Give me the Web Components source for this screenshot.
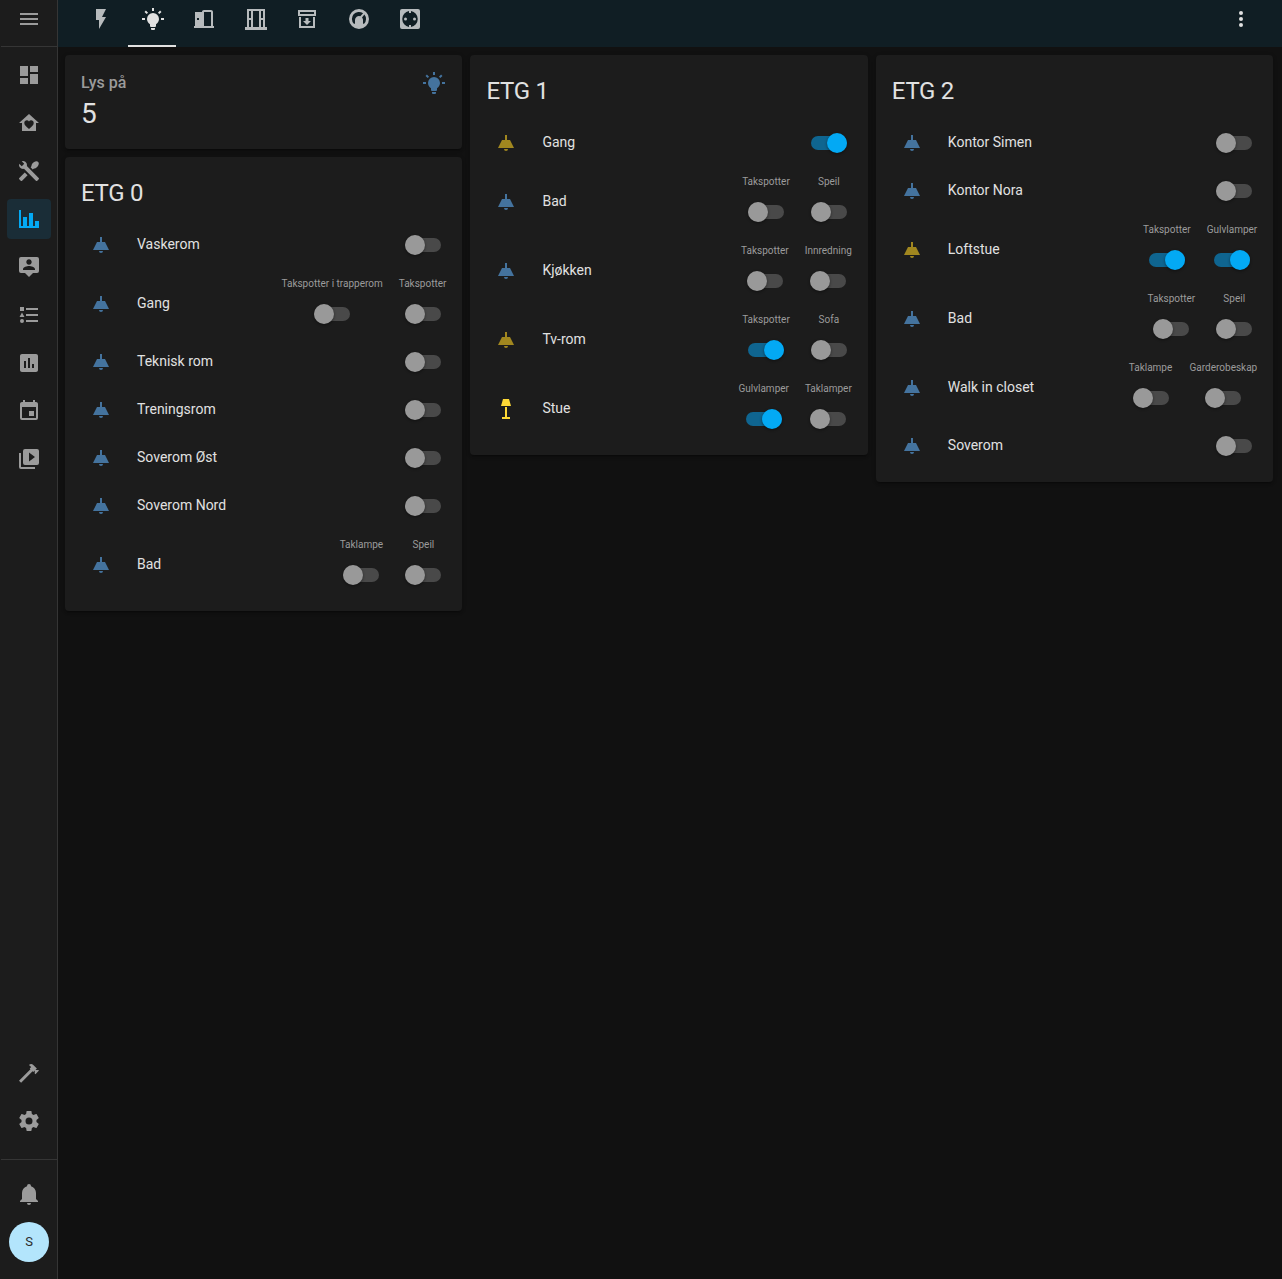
<!DOCTYPE html>
<html lang="nb">
<head>
<meta charset="utf-8">
<title>Lys</title>
<style>
html,body{margin:0;height:100%;background:#111;overflow:hidden}
body{font-family:Roboto,"Noto Sans",sans-serif;color:#e1e1e1}
</style>
</head>
<body>
<home-dashboard></home-dashboard>
<script>
const ICONS = {
  menu:'M3,6H21V8H3V6M3,11H21V13H3V11M3,16H21V18H3V16Z',
  dashboard:'M13,3V9H21V3M13,21H21V11H13M3,21H11V15H3M3,13H11V3H3V13Z',
  heart:'M12,3L2,12H5V20H19V12H22L12,3M12,18C9,15.6 7.3,14 7.3,12C7.3,10.4 8.5,9.3 9.9,9.3C10.8,9.3 11.5,9.7 12,10.4C12.5,9.7 13.2,9.3 14.1,9.3C15.5,9.3 16.7,10.4 16.7,12C16.7,14 15,15.6 12,18Z',
  tools:'M21.71 20.29L20.29 21.71A1 1 0 0 1 18.88 21.71L7 9.85A3.81 3.81 0 0 1 6 10A4 4 0 0 1 2.22 4.7L4.76 7.24L5.29 6.71L6.71 5.29L7.24 4.76L4.7 2.22A4 4 0 0 1 10 6A3.81 3.81 0 0 1 9.85 7L21.71 18.88A1 1 0 0 1 21.71 20.29M2.29 18.88A1 1 0 0 0 2.29 20.29L3.71 21.71A1 1 0 0 0 5.12 21.71L10.59 16.25L7.76 13.42M20.2 2.2C18.2 1.8 15.6 3.6 14.8 5.5C14.4 6.6 14.6 7.4 13.6 8.3L15.7 10.4C16.6 9.4 17.4 9.6 18.5 9.2C20.4 8.4 22.2 5.8 21.8 3.8Z',
  chart:'M22,21H2V3H4V19H6V10H10V19H12V6H16V19H18V14H22V21Z',
  person:'M20 2H4A2 2 0 0 0 2 4V16A2 2 0 0 0 4 18H8L12 22L16 18H20A2 2 0 0 0 22 16V4A2 2 0 0 0 20 2M12 4.3C13.5 4.3 14.7 5.5 14.7 7S13.5 9.7 12 9.7 9.3 8.5 9.3 7 10.5 4.3 12 4.3M18 15H6V14.1C6 12.1 10 11 12 11S18 12.1 18 14.1V15Z',
  list:'M5,9.5L7.5,14H2.5L5,9.5M3,4H7V8H3V4M5,20A2,2 0 0,0 7,18A2,2 0 0,0 5,16A2,2 0 0,0 3,18A2,2 0 0,0 5,20M9,5V7H21V5H9M9,19H21V17H9V19M9,13H21V11H9V13Z',
  poll:'M9 17H7V10H9V17M13 17H11V7H13V17M17 17H15V13H17V17M19 3H5C3.9 3 3 3.9 3 5V19C3 20.1 3.9 21 5 21H19C20.1 21 21 20.1 21 19V5C21 3.9 20.1 3 19 3Z',
  calendar:'M19,19H5V8H19M16,1V3H8V1H6V3H5C3.89,3 3,3.89 3,5V19A2,2 0 0,0 5,21H19A2,2 0 0,0 21,19V5C21,3.89 20.1,3 19,3H18V1M17,12H12V17H17V12Z',
  media:'M4,6H2V20A2,2 0 0,0 4,22H18V20H4V6M20,2H8A2,2 0 0,0 6,4V16A2,2 0 0,0 8,18H20A2,2 0 0,0 22,16V4A2,2 0 0,0 20,2M12,14.5V5.5L18,10L12,14.5Z',
  hammer:'M2,19.63L13.43,8.2L12.72,7.5L14.14,6.07L12,3.89C13.2,2.7 15.09,2.7 16.27,3.89L19.87,7.5L18.45,8.91H21.29L22,9.62L18.45,13.21L17.74,12.5V9.62L16.27,11.04L15.56,10.33L4.13,21.76L2,19.63Z',
  cog:'M12,15.5A3.5,3.5 0 0,1 8.5,12A3.5,3.5 0 0,1 12,8.5A3.5,3.5 0 0,1 15.5,12A3.5,3.5 0 0,1 12,15.5M19.43,12.97C19.47,12.65 19.5,12.33 19.5,12C19.5,11.67 19.47,11.34 19.43,11L21.54,9.37C21.73,9.22 21.78,8.95 21.66,8.73L19.66,5.27C19.54,5.05 19.27,4.96 19.05,5.05L16.56,6.05C16.04,5.66 15.5,5.32 14.87,5.07L14.5,2.42C14.46,2.18 14.25,2 14,2H10C9.75,2 9.54,2.18 9.5,2.42L9.13,5.07C8.5,5.32 7.96,5.66 7.44,6.05L4.95,5.05C4.73,4.96 4.46,5.05 4.34,5.27L2.34,8.73C2.21,8.95 2.27,9.22 2.46,9.37L4.57,11C4.53,11.34 4.5,11.67 4.5,12C4.5,12.33 4.53,12.65 4.57,12.97L2.46,14.63C2.27,14.78 2.21,15.05 2.34,15.27L4.34,18.73C4.46,18.95 4.73,19.03 4.95,18.95L7.44,17.94C7.96,18.34 8.5,18.68 9.13,18.93L9.5,21.58C9.54,21.82 9.75,22 10,22H14C14.25,22 14.46,21.82 14.5,21.58L14.87,18.93C15.5,18.67 16.04,18.34 16.56,17.94L19.05,18.95C19.27,19.03 19.54,18.95 19.66,18.73L21.66,15.27C21.78,15.05 21.73,14.78 21.54,14.63L19.43,12.97Z',
  bell:'M21,19V20H3V19L5,17V11C5,7.9 7.03,5.17 10,4.29C10,4.19 10,4.1 10,4A2,2 0 0,1 12,2A2,2 0 0,1 14,4C14,4.1 14,4.19 14,4.29C16.97,5.17 19,7.9 19,11V17L21,19M14,21A2,2 0 0,1 12,23A2,2 0 0,1 10,21',
  flash:'M7,2V13H10V22L17,10H13L17,2H7Z',
  bulb:'M12,6A6,6 0 0,1 18,12C18,14.22 16.79,16.16 15,17.2V19A1,1 0 0,1 14,20H10A1,1 0 0,1 9,19V17.2C7.21,16.16 6,14.22 6,12A6,6 0 0,1 12,6M14,21V22A1,1 0 0,1 13,23H11A1,1 0 0,1 10,22V21H14M20,11H23V13H20V11M1,11H4V13H1V11M13,1V4H11V1H13M4.92,3.5L7.05,5.64L5.63,7.05L3.5,4.93L4.92,3.5M16.95,5.63L19.07,3.5L20.5,4.93L18.37,7.05L16.95,5.63Z',
  door:'M12,3C10.89,3 10,3.89 10,5H3V19H2V21H22V19H21V5C21,3.89 20.11,3 19,3H12M12,5H19V19H12V5M5,11H7V13H5V11Z',
  window:'M3,2H21V20H23V23H1V20H3V2M5,4V11H7V4H5M5,13V20H7V13H5M9,4V20H15V4H9M17,4V11H19V4H17M17,13V20H19V13H17Z',
  archive:'M20 21H4V10H6V19H18V10H20V21M3 3H21V9H3V3M5 5V7H19V5M10.5 11V14H8L12 18L16 14H13.5V11',
  gauge:'M12,2A10,10 0 1,0 12,22A10,10 0 1,0 12,2M6.9,16.8A7,7 0 0,1 16.1,6.3L13.3,9.2A4,4 0 0,0 8,13V16.8H6.9M17.4,7.5A7,7 0 0,1 17.1,16.8H16V13C16,12 15.6,11 15,10.4L17.4,7.5Z',
  socket:'M4,2H20A2,2 0 0,1 22,4V20A2,2 0 0,1 20,22H4A2,2 0 0,1 2,20V4A2,2 0 0,1 4,2M11,4.1A8,8 0 0,0 11,19.9V18H13V19.9A8,8 0 0,0 13,4.1V6H11V4.1M7.5,10.5A1.5,1.5 0 1,1 7.5,13.5A1.5,1.5 0 1,1 7.5,10.5M16.5,10.5A1.5,1.5 0 1,1 16.5,13.5A1.5,1.5 0 1,1 16.5,10.5Z',
  dots:'M12,16A2,2 0 1,1 12,20A2,2 0 1,1 12,16M12,10A2,2 0 1,1 12,14A2,2 0 1,1 12,10M12,4A2,2 0 1,1 12,8A2,2 0 1,1 12,4Z',
  ceiling:'M8,9H11V4H13V9H16L20,17H4L8,9M14,18A2,2 0 0,1 12,20A2,2 0 0,1 10,18H14Z',
  floor:'M9,2H15L17,9H7L9,2M11,10H13V20H16V22H8V20H11V10Z'
};
function define(name, render) {
  customElements.define(name, class extends HTMLElement {
    connectedCallback() {
      if (this.shadowRoot) return;
      const t = document.createElement('template');
      t.innerHTML = render(this);
      this.attachShadow({mode:'open'}).append(t.content.cloneNode(true));
    }
  });
}
define('ha-icon', el => `<style>:host{display:block;width:24px;height:24px;flex:none}svg{display:block;width:24px;height:24px;fill:currentColor}</style>
<svg viewBox="0 0 24 24"><path fill-rule="evenodd" d="${ICONS[el.getAttribute('name')]}"/></svg>`);

define('ha-switch', el => `<style>
:host{display:flex;align-items:center;justify-content:center;width:46px;height:40px;flex:none}
.track{display:flex;align-items:center;width:36px;height:14px;border-radius:7px;background:#494949}
.thumb{width:20px;height:20px;flex:none;border-radius:50%;background:#999;box-shadow:0 1px 3px rgba(0,0,0,.45)}
:host([on]) .track{background:#0f6590;justify-content:flex-end}
:host([on]) .thumb{background:#03a9f4}
</style><div class="track"><div class="thumb"></div></div>`);

define('light-control', el => `<style>
:host{display:flex;flex-direction:column;align-items:center;min-width:46px}
span{font-size:10px;line-height:21px;height:21px;color:#9b9b9b;white-space:nowrap}
</style><span><slot></slot></span><ha-switch ${el.hasAttribute('on')?'on':''}></ha-switch>`);

define('light-row', el => `<style>
:host{display:flex;align-items:center;min-height:40px}
.icon{display:flex;justify-content:center;width:40px;color:${el.getAttribute('color')||'#44739e'}}
.name{flex:1;margin-left:16px;font-size:14px;line-height:20px;padding-bottom:2px}
.controls{display:flex;gap:16px}
</style><div class="icon"><ha-icon name="${el.getAttribute('icon')||'ceiling'}"></ha-icon></div>
<div class="name">${el.getAttribute('name')}</div><div class="controls"><slot></slot></div>`);

define('ha-card', () => `<style>
:host{display:block;background:#1c1c1c;border-radius:4px;box-shadow:0 2px 2px rgba(0,0,0,.14),0 1px 5px rgba(0,0,0,.12),0 3px 1px -2px rgba(0,0,0,.2)}
</style><slot></slot>`);

define('entities-card', el => `<style>
:host{display:block}
h1{margin:0;padding:12px 16px 8px;font-size:24px;line-height:48px;font-weight:400;letter-spacing:-.288px}
.rows{display:flex;flex-direction:column;gap:8px;padding:0 16px 16px}
</style><ha-card><h1>${el.getAttribute('heading')}</h1><div class="rows"><slot></slot></div></ha-card>`);

define('sensor-card', el => `<style>
:host{display:block}
.body{display:flex;justify-content:space-between;height:94px;padding:16px;box-sizing:border-box}
.label{font-size:16px;line-height:22px;font-weight:500;color:#9b9b9b;margin-top:1px}
.value{font-size:28px;line-height:28px;margin-top:6px}
ha-icon{color:#44739e}
</style><ha-card><div class="body"><div><div class="label">Lys på</div><div class="value">5</div></div><ha-icon name="bulb"></ha-icon></div></ha-card>`);

define('side-item', () => `<style>
:host{display:flex;align-items:center;justify-content:center;width:44px;height:40px;margin:4px 0;border-radius:4px;color:#9b9b9b;flex:none}
:host([active]){background:#1a2d37;color:#03a9f4}
</style><slot></slot>`);

define('side-bar', () => {
  const item = (n, a='') => `<side-item ${a}><ha-icon name="${n}"></ha-icon></side-item>`;
  return `<style>
:host{display:flex;flex-direction:column;align-items:center;width:58px;box-sizing:border-box;border-right:1px solid #353535;padding-left:1px;height:100%;background:#1c1c1c;flex:none}
.head{width:100%;height:47px;box-sizing:border-box;border-bottom:1px solid #353535;display:flex;justify-content:center;padding-top:7px;color:#9b9b9b;margin-bottom:4px}
.space{flex:1}
.foot{width:100%;border-top:1px solid #353535;margin-top:14px;padding-top:10px;height:120px;box-sizing:border-box;display:flex;flex-direction:column;align-items:center}
.avatar{width:40px;height:40px;margin-top:4px;border-radius:50%;background:#b3e5fc;color:#2b2b2b;font-size:13px;line-height:40px;text-align:center}
</style>
<div class="head"><ha-icon name="menu"></ha-icon></div>
${item('dashboard')}${item('heart')}${item('tools')}${item('chart','active')}${item('person')}${item('list')}${item('poll')}${item('calendar')}${item('media')}
<div class="space"></div>${item('hammer')}${item('cog')}
<div class="foot">${item('bell')}<div class="avatar">S</div></div>`;
});

define('view-tabs', () => `<style>
:host{display:flex;height:47px;background:#101e24;padding-left:17.25px;flex:none;color:#b7bbbd}
.tab{width:51.5px;display:flex;justify-content:center;box-sizing:border-box;padding-top:7px}
.tab.active{color:#e1e1e1;width:48px;margin:0 2px 0 1.5px;border-bottom:2px solid #e1e1e1}
.tab.active ha-icon{margin-left:.5px}
.more{margin-left:auto;margin-right:29px;padding-top:7px;color:#e1e1e1}
</style>${['flash','bulb','door','window','archive','gauge','socket'].map(n=>`<div class="tab ${n==='bulb'?'active':''}"><ha-icon name="${n}"></ha-icon></div>`).join('')}
<div class="more"><ha-icon name="dots"></ha-icon></div>`);

define('home-dashboard', () => {
  const dim = '#a1871f';
  const row = (name, controls, color='', icon='') => `<light-row name="${name}" color="${color}" icon="${icon}">${
    typeof controls === 'boolean' ? `<ha-switch ${controls?'on':''}></ha-switch>` :
    controls.map(([l,on])=>`<light-control ${on?'on':''}>${l}</light-control>`).join('')}</light-row>`;
  return `<style>
:host{display:flex;height:1279px;width:1282px}
.main{flex:1;display:flex;flex-direction:column;min-width:0}
.cols{display:flex;gap:8px;padding:8px 8.8px 0 7px;align-items:flex-start}
.col{flex:1 1 0;min-width:0;display:flex;flex-direction:column;gap:8px}
</style>
<side-bar></side-bar>
<div class="main"><view-tabs></view-tabs>
<div class="cols">
<div class="col"><sensor-card></sensor-card><entities-card heading="ETG 0">
${row('Vaskerom',false)}${row('Gang',[['Takspotter i trapperom'],['Takspotter']])}${row('Teknisk rom',false)}${row('Treningsrom',false)}${row('Soverom Øst',false)}${row('Soverom Nord',false)}${row('Bad',[['Taklampe'],['Speil']])}
</entities-card></div>
<div class="col"><entities-card heading="ETG 1">
${row('Gang',true,dim)}${row('Bad',[['Takspotter'],['Speil']])}${row('Kjøkken',[['Takspotter'],['Innredning']])}${row('Tv-rom',[['Takspotter',1],['Sofa']],dim)}${row('Stue',[['Gulvlamper',1],['Taklamper']],'#fdd835','floor')}
</entities-card></div>
<div class="col"><entities-card heading="ETG 2">
${row('Kontor Simen',false)}${row('Kontor Nora',false)}${row('Loftstue',[['Takspotter',1],['Gulvlamper',1]],dim)}${row('Bad',[['Takspotter'],['Speil']])}${row('Walk in closet',[['Taklampe'],['Garderobeskap']])}${row('Soverom',false)}
</entities-card></div>
</div></div>`;
});
</script>
</body>
</html>
